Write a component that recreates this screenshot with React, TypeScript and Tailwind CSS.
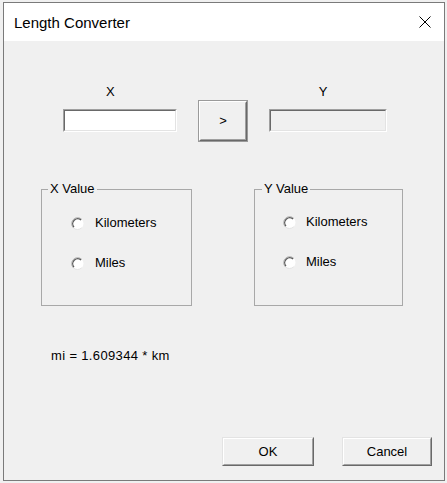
// Classic Win32 "Length Converter" dialog, drawn with plain Tailwind borders.
function Radio({ label, gap }: { label: string; gap: string }) {
  return (
    <div className={`flex h-4 items-center ${gap}`}>
      <svg viewBox="0 0 13 13" width="13" height="13" aria-hidden>
        <circle cx="6.5" cy="6.5" r="6" fill="#fff" />
        <path d="M10.74 10.74A6 6 0 0 1 2.26 10.74" fill="none" stroke="#e3e3e3" strokeWidth="1" />
        <path d="M2.97 10.03A5 5 0 0 1 10.03 2.97" fill="none" stroke="#5a5a5a" strokeWidth="1.4" />
        <path d="M2.26 10.74A6 6 0 0 1 10.74 2.26" fill="none" stroke="#a8a8a8" strokeWidth="0.9" />
      </svg>
      <span>{label}</span>
    </div>
  );
}

function Sunken({ width, readOnly }: { width: string; readOnly?: boolean }) {
  return (
    <div
      className={`mt-[9px] flex h-[23px] ${width} border border-t-[#a0a0a0] border-l-[#a0a0a0] border-r-white border-b-white`}
    >
      <div
        className={`flex-1 border border-t-[#696969] border-l-[#696969] border-r-[#e3e3e3] border-b-[#e3e3e3] ${
          readOnly ? "bg-[#f0f0f0]" : "bg-white"
        }`}
      />
    </div>
  );
}

function PushButton({ label, width }: { label: string; width: string }) {
  return (
    <div
      className={`flex h-[29px] ${width} border border-t-[#e3e3e3] border-l-[#e3e3e3] border-r-[#696969] border-b-[#696969]`}
    >
      <div className="flex flex-1 items-center justify-center border border-t-white border-l-white border-r-[#a0a0a0] border-b-[#a0a0a0] bg-[#f0f0f0]">
        {label}
      </div>
    </div>
  );
}

export default function App() {
  return (
    <div className="h-[483px] w-[447px] bg-[#f0f0f0] pl-[3px] pt-[2px] font-['Liberation_Sans',Arial,sans-serif] text-[13px] leading-4 text-black">
      <div className="flex h-[479px] w-[442px] flex-col border border-[#7a7a7a] bg-[#f0f0f0]">
        {/* title bar */}
        <div className="flex h-[38px] items-center justify-between bg-white pl-[10px] pr-[13px]">
          <span className="text-[15px] leading-[17px]">Length Converter</span>
          <svg viewBox="0 0 12 12" width="12" height="12" aria-hidden>
            <path d="M0.5 0.5L11.5 11.5M11.5 0.5L0.5 11.5" stroke="#000" strokeWidth="1" fill="none" />
          </svg>
        </div>

        <div className="flex flex-1 flex-col">
          {/* X / Y captions */}
          <div className="mt-[43px] flex h-4">
            <span className="ml-[102px]">X</span>
            <span className="ml-[204px]">Y</span>
          </div>

          {/* fields + convert button */}
          <div className="ml-[59px] flex items-start">
            <Sunken width="w-[114px]" />
            <div className="ml-[21px] flex h-[42px] w-[50px] border border-[#9a9a9a]">
              <div className="flex flex-1 border border-t-white border-l-white border-r-[#696969] border-b-[#696969]">
                <div className="flex flex-1 items-center justify-center border border-t-[#f0f0f0] border-l-[#f0f0f0] border-r-[#a0a0a0] border-b-[#a0a0a0]">
                  &gt;
                </div>
              </div>
            </div>
            <div className="ml-[21px]">
              <Sunken width="w-[118px]" readOnly />
            </div>
          </div>

          {/* unit group boxes */}
          <div className="mt-[39px] flex">
            <fieldset className="ml-[37px] h-[125px] w-[151px] border border-[#a8a8a8]">
              <legend className="ml-[6px] px-[2px] leading-4">X Value</legend>
              <div className="mt-[18px] flex flex-col gap-6 pl-[29px]">
                <Radio label="Kilometers" gap="gap-[11px]" />
                <Radio label="Miles" gap="gap-[11px]" />
              </div>
            </fieldset>
            <fieldset className="ml-[62px] h-[125px] w-[149px] border border-[#a8a8a8]">
              <legend className="ml-[7px] px-[2px] leading-4">Y Value</legend>
              <div className="mt-[17px] flex flex-col gap-6 pl-[28px]">
                <Radio label="Kilometers" gap="gap-[10px]" />
                <Radio label="Miles" gap="gap-[10px]" />
              </div>
            </fieldset>
          </div>

          <div className="mt-[42px] pl-[47px] tracking-[0.35px]">mi = 1.609344 * km</div>

          {/* dialog buttons */}
          <div className="mb-[14px] mt-auto flex justify-end gap-[28px] pr-[12px]">
            <PushButton label="OK" width="w-[92px]" />
            <PushButton label="Cancel" width="w-[90px]" />
          </div>
        </div>
      </div>
    </div>
  );
}
